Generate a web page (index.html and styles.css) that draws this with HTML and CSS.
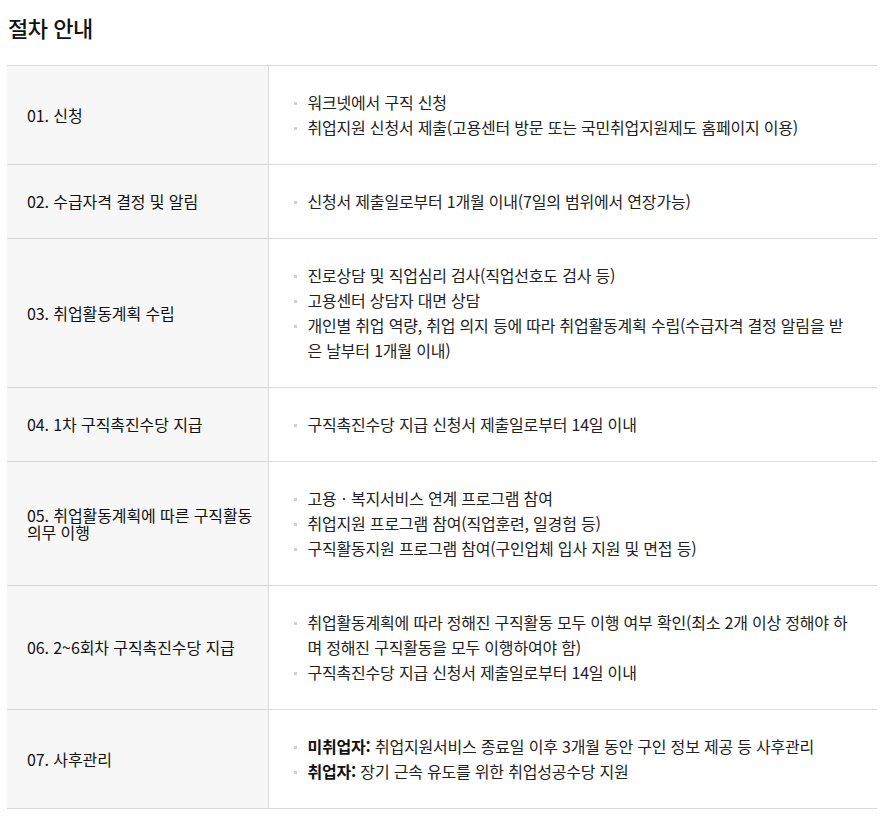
FILE: index.html
```html
<!DOCTYPE html>
<html lang="ko">
<head>
<meta charset="utf-8">
<title>절차 안내</title>
<link rel="stylesheet" href="styles.css">
</head>
<body>
<div class="page">
  <h2 class="title">절차 안내</h2>
  <table class="steps">
    <tbody>
      <tr>
        <th>01. 신청</th>
        <td><ul class="list">
          <li>워크넷에서 구직 신청</li>
          <li>취업지원 신청서 제출(고용센터 방문 또는 국민취업지원제도 홈페이지 이용)</li>
        </ul></td>
      </tr>
      <tr>
        <th>02. 수급자격 결정 및 알림</th>
        <td><ul class="list">
          <li>신청서 제출일로부터 1개월 이내(7일의 범위에서 연장가능)</li>
        </ul></td>
      </tr>
      <tr>
        <th>03. 취업활동계획 수립</th>
        <td><ul class="list">
          <li>진로상담 및 직업심리 검사(직업선호도 검사 등)</li>
          <li>고용센터 상담자 대면 상담</li>
          <li>개인별 취업 역량, 취업 의지 등에 따라 취업활동계획 수립(수급자격 결정 알림을 받은 날부터 1개월 이내)</li>
        </ul></td>
      </tr>
      <tr>
        <th>04. 1차 구직촉진수당 지급</th>
        <td><ul class="list">
          <li>구직촉진수당 지급 신청서 제출일로부터 14일 이내</li>
        </ul></td>
      </tr>
      <tr>
        <th>05. 취업활동계획에 따른 구직활동 의무 이행</th>
        <td><ul class="list">
          <li>고용ㆍ복지서비스 연계 프로그램 참여</li>
          <li>취업지원 프로그램 참여(직업훈련, 일경험 등)</li>
          <li>구직활동지원 프로그램 참여(구인업체 입사 지원 및 면접 등)</li>
        </ul></td>
      </tr>
      <tr>
        <th>06. 2~6회차 구직촉진수당 지급</th>
        <td><ul class="list">
          <li>취업활동계획에 따라 정해진 구직활동 모두 이행 여부 확인(최소 2개 이상 정해야 하며 정해진 구직활동을 모두 이행하여야 함)</li>
          <li>구직촉진수당 지급 신청서 제출일로부터 14일 이내</li>
        </ul></td>
      </tr>
      <tr>
        <th>07. 사후관리</th>
        <td><ul class="list">
          <li><strong>미취업자:</strong> 취업지원서비스 종료일 이후 3개월 동안 구인 정보 제공 등 사후관리</li>
          <li><strong>취업자:</strong> 장기 근속 유도를 위한 취업성공수당 지원</li>
        </ul></td>
      </tr>
    </tbody>
  </table>
</div>
</body>
</html>
```
FILE: styles.css
```css
html, body {
  margin: 0;
  padding: 0;
  background: #fff;
}
body {
  font-family: "Noto Sans CJK KR", "Noto Sans", sans-serif;
  color: #222;
}
.page {
  padding: 0 8px 0 7px;
}
.title {
  margin: 0;
  padding: 11px 0 22px 1px;
  font-size: 22px;
  line-height: 32px;
  font-weight: 500;
  color: #111;
  letter-spacing: -0.5px;
}
.steps {
  width: 870px;
  border-collapse: collapse;
  table-layout: fixed;
  border-top: 1px solid #d9d9d9;
}
.steps tr {
  border-bottom: 1px solid #d9d9d9;
}
.steps th {
  width: 261px;
  box-sizing: border-box;
  background: #f7f7f7;
  border-right: 1px solid #d9d9d9;
  text-align: left;
  vertical-align: middle;
  font-weight: 400;
  font-size: 16px;
  line-height: 17px;
  color: #111;
  padding: 0 12px 0 20px;
  letter-spacing: -0.1px;
  word-break: keep-all;
}
.steps td {
  padding: 24px 20px 24px 25px;
  vertical-align: middle;
}
.list {
  list-style: none;
  margin: 0;
  padding: 0;
}
.list li {
  position: relative;
  padding-left: 14px;
  font-size: 16px;
  line-height: 25px;
  color: #222;
  letter-spacing: -0.2px;
}
.list li::before {
  content: "";
  position: absolute;
  left: 0;
  top: 12px;
  width: 3px;
  height: 3px;
  background: #cfcfcf;
}
.list strong {
  font-weight: 700;
  color: #111;
}
```
